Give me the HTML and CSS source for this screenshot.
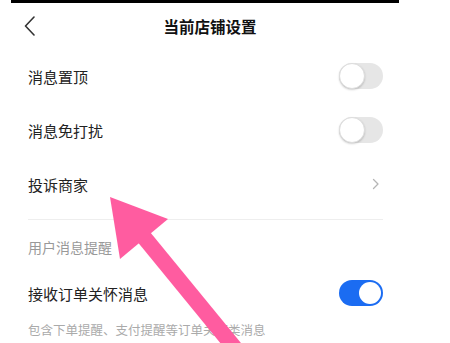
FILE: index.html
```html
<!DOCTYPE html>
<html lang="zh-CN">
<head>
  <meta charset="UTF-8" />
  <meta name="viewport" content="width=device-width, initial-scale=1.0"/>
  <title>当前店铺设置</title>
  <link rel="stylesheet" href="styles.css">
</head>
<body>

  <div class="screen">
    <div class="status-bar"></div>

    <div class="nav">
      <svg class="back" width="12" height="20" viewBox="0 0 12 20">
        <path d="M10 1 L1.5 10 L10 19" fill="none" stroke="#333" stroke-width="1.6" stroke-linecap="round" stroke-linejoin="round"/>
      </svg>
      <div class="nav-title">当前店铺设置</div>
    </div>

    <div class="row">
      <span class="label">消息置顶</span>
      <div class="switch"><div class="knob"></div></div>
    </div>

    <div class="row">
      <span class="label">消息免打扰</span>
      <div class="switch"><div class="knob"></div></div>
    </div>

    <div class="row">
      <span class="label">投诉商家</span>
      <svg class="arrow-right" width="8" height="12" viewBox="0 0 8 12">
        <path d="M1.5 1.5 L6 6 L1.5 10.5" fill="none" stroke="#b5b5b5" stroke-width="1.3" stroke-linecap="round" stroke-linejoin="round"/>
      </svg>
    </div>

    <div class="divider"></div>

    <div class="section-title">用户消息提醒</div>

    <div class="row row-care">
      <span class="label">接收订单关怀消息</span>
      <div class="switch on"><div class="knob"></div></div>
    </div>

    <div class="hint">包含下单提醒、支付提醒等订单关怀类消息</div>
  </div>

  <!-- pink pointer drawn over the screenshot -->
  <svg class="pointer" width="450" height="343" viewBox="0 0 450 343">
    <line x1="143" y1="236" x2="238" y2="352" stroke="#ff5ca0" stroke-width="16"/>
    <polygon points="110,197 168,219 120,259" fill="#ff5ca0"/>
  </svg>

</body>
</html>
```

FILE: styles.css
```css
body {
  margin: 0;
  background: #fff;
  font-family: "Noto Sans CJK SC", "Noto Sans", sans-serif;
  color: #222;
  overflow: hidden;
}
.screen {
  width: 411px;
  height: 343px;
  box-sizing: border-box;
  padding: 0 28px;
}
.status-bar {
  height: 3px;
  background: #000;
  margin: 0 -16px 0 -17px;
}
.nav {
  height: 46px;
  display: flex;
  align-items: center;
  justify-content: center;
  position: relative;
  padding-left: 9px;
}
.back {
  position: absolute;
  left: -4px;
  top: 13px;
}
.nav-title {
  font-size: 15.5px;
  font-weight: bold;
  color: #111;
}
.row {
  height: 54px;
  display: flex;
  align-items: center;
  justify-content: space-between;
}
.label {
  font-size: 15px;
  color: #222;
}
.switch {
  width: 44px;
  height: 26px;
  border-radius: 13px;
  background: #e6e6e6;
  position: relative;
}
.knob {
  position: absolute;
  left: 0;
  top: 0;
  width: 26px;
  height: 26px;
  box-sizing: border-box;
  border-radius: 50%;
  background: #fff;
  border: 1px solid #ddd;
  box-shadow: 0 1px 2px rgba(0, 0, 0, 0.18);
}
.switch.on {
  background: #1b6cf2;
}
.switch.on .knob {
  left: auto;
  right: 2px;
  top: 2px;
  width: 22px;
  height: 22px;
  border: none;
  box-shadow: none;
}
.arrow-right {
  margin-right: 3px;
}
.divider {
  height: 1px;
  background: #eee;
  margin-top: 8px;
}
.section-title {
  font-size: 14px;
  color: #999;
  line-height: 20px;
  padding-top: 17px;
}
.row-care {
  height: 44px;
  margin-top: 14px;
}
.hint {
  font-size: 12.5px;
  color: #aaa;
  line-height: 18px;
  margin-top: 6px;
}
.pointer {
  position: absolute;
  left: 0;
  top: 0;
  pointer-events: none;
}
```
